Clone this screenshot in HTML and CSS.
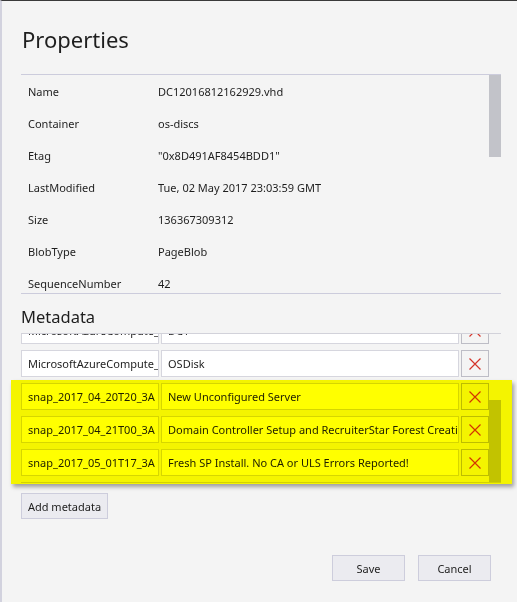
FILE: index.html
```html
<!DOCTYPE html>
<html>
<head>
<meta charset="utf-8">
<link rel="stylesheet" href="styles.css">
</head>
<body>
<div class="dialog">
  <h1 class="title">Properties</h1>
  <div class="props">
    <div class="props-list">
      <div class="prow"><span class="pkey">Name</span><span class="pval">DC12016812162929.vhd</span></div>
      <div class="prow"><span class="pkey">Container</span><span class="pval">os-discs</span></div>
      <div class="prow"><span class="pkey">Etag</span><span class="pval">"0x8D491AF8454BDD1"</span></div>
      <div class="prow"><span class="pkey">LastModified</span><span class="pval">Tue, 02 May 2017 23:03:59 GMT</span></div>
      <div class="prow"><span class="pkey">Size</span><span class="pval">136367309312</span></div>
      <div class="prow"><span class="pkey">BlobType</span><span class="pval">PageBlob</span></div>
      <div class="prow"><span class="pkey">SequenceNumber</span><span class="pval">42</span></div>
    </div>
    <div class="scroll"><div class="thumb props-thumb"></div></div>
  </div>
  <h2 class="section">Metadata</h2>
  <div class="meta">
    <div class="meta-view">
      <div class="meta-list">
        <div class="mrow"><div class="field key">MicrosoftAzureCompute_VMName</div><div class="field val">DC1</div><div class="del"><svg width="12" height="12" viewBox="0 0 12 12"><path d="M0.5 0.5L11.5 11.5M11.5 0.5L0.5 11.5"/></svg></div></div>
        <div class="mrow"><div class="field key">MicrosoftAzureCompute_DiskType</div><div class="field val">OSDisk</div><div class="del"><svg width="12" height="12" viewBox="0 0 12 12"><path d="M0.5 0.5L11.5 11.5M11.5 0.5L0.5 11.5"/></svg></div></div>
        <div class="mrow"><div class="field key">snap_2017_04_20T20_3A</div><div class="field val">New Unconfigured Server</div><div class="del"><svg width="12" height="12" viewBox="0 0 12 12"><path d="M0.5 0.5L11.5 11.5M11.5 0.5L0.5 11.5"/></svg></div></div>
        <div class="mrow"><div class="field key">snap_2017_04_21T00_3A</div><div class="field val">Domain Controller Setup and RecruiterStar Forest Creation</div><div class="del"><svg width="12" height="12" viewBox="0 0 12 12"><path d="M0.5 0.5L11.5 11.5M11.5 0.5L0.5 11.5"/></svg></div></div>
        <div class="mrow"><div class="field key">snap_2017_05_01T17_3A</div><div class="field val">Fresh SP Install. No CA or ULS Errors Reported!</div><div class="del"><svg width="12" height="12" viewBox="0 0 12 12"><path d="M0.5 0.5L11.5 11.5M11.5 0.5L0.5 11.5"/></svg></div></div>
      </div>
    </div>
    <div class="scroll"><div class="thumb meta-thumb"></div></div>
  </div>
  <button class="btn add">Add metadata</button>
  <div class="footer">
    <button class="btn act">Save</button>
    <button class="btn act">Cancel</button>
  </div>
  <div class="highlight"></div>
</div>
</body>
</html>
```
FILE: styles.css
```css
html, body {
  margin: 0;
  padding: 0;
  background: #f4f4f4;
}
body {
  width: 517px;
  height: 602px;
  overflow: hidden;
  font-family: "Segoe UI", "Noto Sans", "Open Sans", sans-serif;
  font-size: 11px;
  color: #1e1e1e;
}
.dialog {
  position: relative;
  box-sizing: border-box;
  width: 517px;
  height: 602px;
  border-top: 1px solid #3a3a3a;
  border-left: 2px solid #d2d2de;
  padding: 0 16px 0 19px;
}
.title {
  margin: 22px 0 19px 1px;
  font-size: 22px;
  line-height: 32px;
  font-weight: normal;
  color: #1e1e1e;
}
.props {
  display: flex;
  height: 218px;
  border-top: 1px solid #ccccdc;
  border-bottom: 1px solid #ccccdc;
}
.props-list {
  flex: 1;
  overflow: hidden;
}
.prow {
  display: flex;
  height: 32px;
  align-items: center;
  padding-left: 7px;
  white-space: nowrap;
}
.pkey {
  width: 130px;
  flex: none;
}
.scroll {
  width: 12px;
  flex: none;
}
.thumb {
  background: #c2c3c9;
  width: 12px;
}
.props-thumb {
  height: 82px;
}
.meta-thumb {
  margin-top: 66px;
  height: 82px;
}
.section {
  margin: 11px 0 4px 0;
  font-size: 16.5px;
  line-height: 24px;
  font-weight: normal;
  color: #1e1e1e;
}
.meta {
  display: flex;
  height: 148px;
  border-top: 1px solid #d2d2da;
  border-bottom: 1px solid #d2d2da;
}
.meta-view {
  flex: 1;
  overflow: hidden;
}
.meta-list {
  margin-top: -17px;
  display: flex;
  flex-direction: column;
  gap: 6px;
}
.mrow {
  display: flex;
  gap: 2px;
  height: 27px;
}
.field {
  box-sizing: border-box;
  height: 27px;
  background: #ffffff;
  border: 1px solid #d6d6de;
  padding: 0 6px;
  line-height: 25px;
  white-space: nowrap;
  overflow: hidden;
}
.key {
  width: 138px;
  flex: none;
}
.val {
  width: 298px;
  flex: none;
}
.del {
  box-sizing: border-box;
  width: 28px;
  height: 27px;
  flex: none;
  border: 1px solid #bdbdc6;
  display: flex;
  align-items: center;
  justify-content: center;
}
.del svg path {
  stroke: #d4352b;
  stroke-width: 1.2;
  fill: none;
}
.btn {
  font-family: "Segoe UI", "Noto Sans", "Open Sans", sans-serif;
  font-size: 11px;
  color: #1e1e1e;
  background: #ebebf0;
  border: 1px solid #cdcddc;
  height: 26px;
  padding: 0;
  box-sizing: border-box;
}
.add {
  display: block;
  margin-top: 10px;
  width: 87px;
}
.footer {
  display: flex;
  justify-content: flex-end;
  gap: 13px;
  margin-top: 36px;
  padding-right: 10px;
}
.act {
  width: 73px;
}
.highlight {
  position: absolute;
  left: 9px;
  top: 379px;
  width: 501px;
  height: 104px;
  background: #ffff00;
  mix-blend-mode: multiply;
  box-shadow: 2px 3px 4px rgba(0, 0, 0, 0.35);
}
```
